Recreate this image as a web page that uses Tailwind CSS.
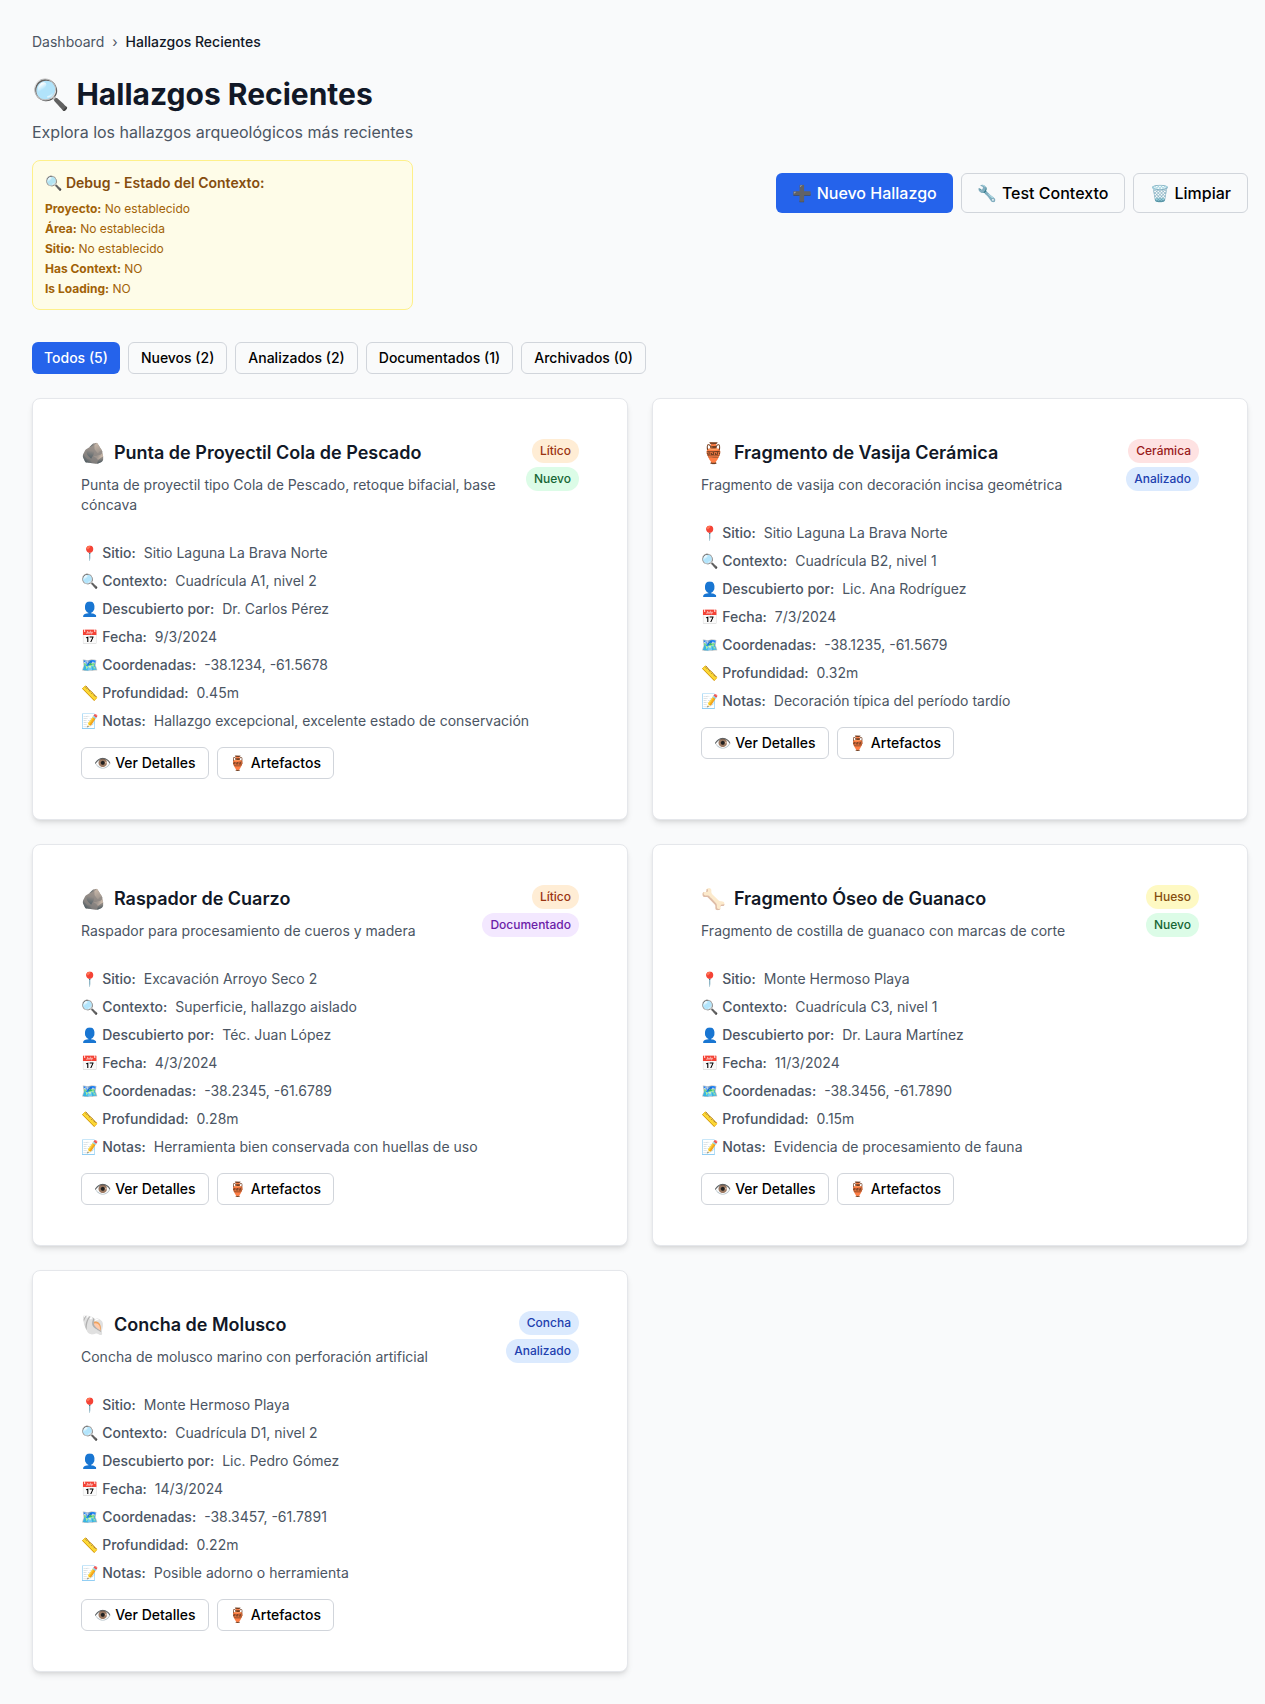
<!DOCTYPE html>
<html lang="es">
<head>
<meta charset="utf-8">
<title>Hallazgos Recientes</title>
<script src="https://cdn.jsdelivr.net/npm/@tailwindcss/browser@4"></script>
</head>
<body class="min-h-screen bg-[#f9fafb] font-[Inter,system-ui,sans-serif,'Noto_Color_Emoji'] text-black">
<main class="py-8 pl-8 pr-[17px]">
  <nav class="mb-6 flex items-center gap-2 text-sm text-[#4b5563]">
    <span>Dashboard</span><span>›</span><span class="font-medium text-[#111827]">Hallazgos Recientes</span>
  </nav>

  <header class="mb-8 flex items-center justify-between">
    <div>
      <h1 class="text-3xl font-bold text-[#111827]">🔍 Hallazgos Recientes</h1>
      <p class="mt-2 text-[#4b5563]">Explora los hallazgos arqueológicos más recientes</p>
      <section class="mt-4 rounded-lg border border-[#fef08a] bg-[#fefce8] p-3">
        <h3 class="mb-2 text-sm font-semibold text-[#854d0e]">🔍 Debug - Estado del Contexto:</h3>
        <div class="space-y-1 text-xs text-[#a16207]">
          <p><strong>Proyecto:</strong> No establecido</p>
          <p><strong>Área:</strong> No establecida</p>
          <p><strong>Sitio:</strong> No establecido</p>
          <p><strong>Has Context:</strong> NO</p>
          <p><strong>Is Loading:</strong> NO</p>
        </div>
      </section>
    </div>
    <div class="flex gap-2">
      <button class="h-10 rounded-md bg-[#2563eb] px-4 font-medium text-white">➕ Nuevo Hallazgo</button>
      <button class="h-10 rounded-md border border-[#d1d5db] px-4 font-medium">🔧 Test Contexto</button>
      <button class="h-10 rounded-md border border-[#d1d5db] px-4 font-medium">🗑️ Limpiar</button>
    </div>
  </header>

  <div class="mb-6 flex gap-2 text-sm font-medium">
    <button class="h-8 rounded-md bg-[#2563eb] px-3 text-white">Todos (5)</button>
    <button class="h-8 rounded-md border border-[#d1d5db] px-3">Nuevos (2)</button>
    <button class="h-8 rounded-md border border-[#d1d5db] px-3">Analizados (2)</button>
    <button class="h-8 rounded-md border border-[#d1d5db] px-3">Documentados (1)</button>
    <button class="h-8 rounded-md border border-[#d1d5db] px-3">Archivados (0)</button>
  </div>

  <div id="hallazgos" class="grid grid-cols-2 gap-6"></div>
</main>

<script>
const tonos = {
  'Lítico': 'bg-[#ffedd5] text-[#9a3412]',
  'Cerámica': 'bg-[#fee2e2] text-[#991b1b]',
  'Hueso': 'bg-[#fef9c3] text-[#854d0e]',
  'Concha': 'bg-[#dbeafe] text-[#1e40af]',
  'Nuevo': 'bg-[#dcfce7] text-[#166534]',
  'Analizado': 'bg-[#dbeafe] text-[#1e40af]',
  'Documentado': 'bg-[#f3e8ff] text-[#6b21a8]',
};
const campos = ['📍 Sitio:', '🔍 Contexto:', '👤 Descubierto por:', '📅 Fecha:', '🗺️ Coordenadas:', '📏 Profundidad:', '📝 Notas:'];
const hallazgos = [
  ['🪨', 'Punta de Proyectil Cola de Pescado', 'Punta de proyectil tipo Cola de Pescado, retoque bifacial, base cóncava', 'Lítico', 'Nuevo',
    ['Sitio Laguna La Brava Norte', 'Cuadrícula A1, nivel 2', 'Dr. Carlos Pérez', '9/3/2024', '-38.1234, -61.5678', '0.45m', 'Hallazgo excepcional, excelente estado de conservación']],
  ['🏺', 'Fragmento de Vasija Cerámica', 'Fragmento de vasija con decoración incisa geométrica', 'Cerámica', 'Analizado',
    ['Sitio Laguna La Brava Norte', 'Cuadrícula B2, nivel 1', 'Lic. Ana Rodríguez', '7/3/2024', '-38.1235, -61.5679', '0.32m', 'Decoración típica del período tardío']],
  ['🪨', 'Raspador de Cuarzo', 'Raspador para procesamiento de cueros y madera', 'Lítico', 'Documentado',
    ['Excavación Arroyo Seco 2', 'Superficie, hallazgo aislado', 'Téc. Juan López', '4/3/2024', '-38.2345, -61.6789', '0.28m', 'Herramienta bien conservada con huellas de uso']],
  ['🦴', 'Fragmento Óseo de Guanaco', 'Fragmento de costilla de guanaco con marcas de corte', 'Hueso', 'Nuevo',
    ['Monte Hermoso Playa', 'Cuadrícula C3, nivel 1', 'Dr. Laura Martínez', '11/3/2024', '-38.3456, -61.7890', '0.15m', 'Evidencia de procesamiento de fauna']],
  ['🐚', 'Concha de Molusco', 'Concha de molusco marino con perforación artificial', 'Concha', 'Analizado',
    ['Monte Hermoso Playa', 'Cuadrícula D1, nivel 2', 'Lic. Pedro Gómez', '14/3/2024', '-38.3457, -61.7891', '0.22m', 'Posible adorno o herramienta']],
];
document.getElementById('hallazgos').innerHTML = hallazgos.map(([icono, titulo, desc, tipo, estado, valores]) => `
  <article class="rounded-lg border border-[#e5e7eb] bg-white px-12 py-10 shadow-md">
    <div class="mb-7 flex items-start justify-between">
      <div class="flex-1">
        <div class="mb-2 flex h-7 items-center gap-2">
          <span class="text-xl">${icono}</span>
          <h3 class="text-lg font-semibold text-[#111827]">${titulo}</h3>
        </div>
        <p class="text-sm text-[#4b5563]">${desc}</p>
      </div>
      <div class="flex flex-col items-end gap-1">
        ${[tipo, estado].map(t => `<span class="rounded-full px-2 py-1 text-xs font-medium ${tonos[t]}">${t}</span>`).join('')}
      </div>
    </div>
    <div class="space-y-2 text-sm text-[#4b5563]">
      ${valores.map((v, i) => `<div class="flex h-5 items-center gap-2"><span class="font-medium">${campos[i]}</span><span>${v}</span></div>`).join('')}
    </div>
    <div class="mt-4 flex gap-2 text-sm font-medium">
      <button class="h-8 rounded-md border border-[#d1d5db] px-3">👁️ Ver Detalles</button>
      <button class="h-8 rounded-md border border-[#d1d5db] px-3">🏺 Artefactos</button>
    </div>
  </article>`).join('');
</script>
</body>
</html>
